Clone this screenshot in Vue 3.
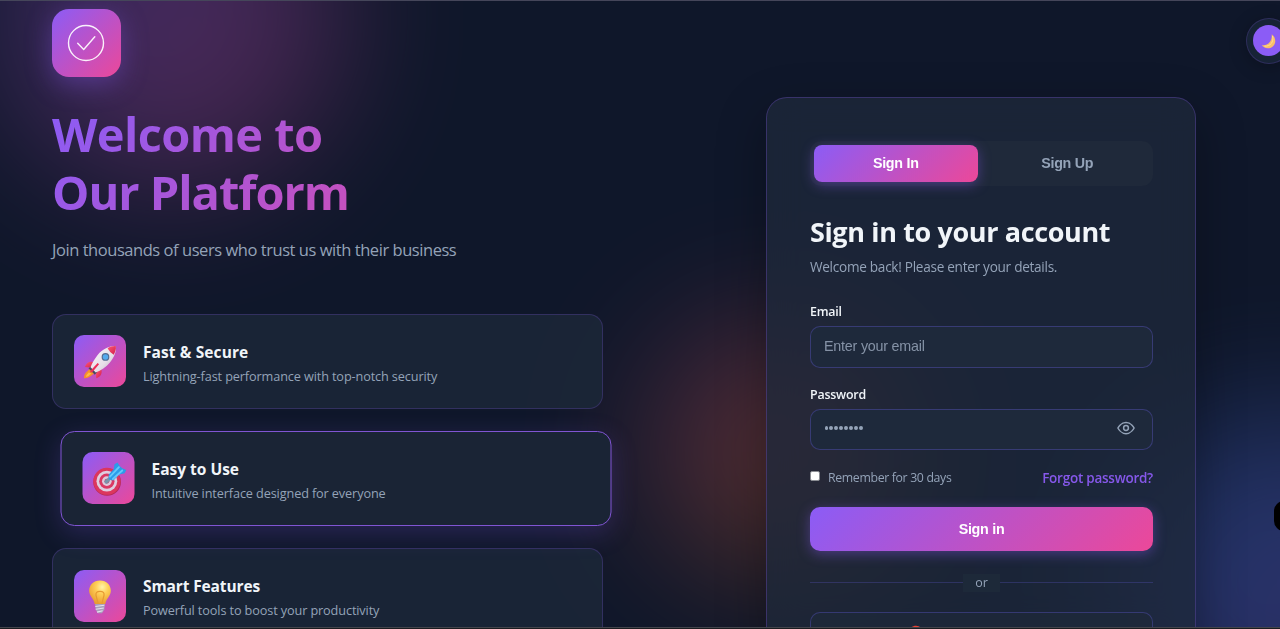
<script setup>
const features = [
  { icon: 'rocket', title: 'Fast & Secure', text: 'Lightning-fast performance with top-notch security' },
  { icon: 'target', title: 'Easy to Use', text: 'Intuitive interface designed for everyone', active: true },
  { icon: 'bulb', title: 'Smart Features', text: 'Powerful tools to boost your productivity' },
]
</script>

<template>
  <div class="page">
    <div class="blob blob-pink"></div>
    <div class="blob blob-blue"></div>
    <div class="blob blob-orange"></div>

    <section class="intro">
      <div class="logo">
        <svg width="38" height="38" viewBox="0 0 38 38" fill="none" stroke="#fff" stroke-opacity=".92" stroke-width="1.4" stroke-linecap="round" stroke-linejoin="round">
          <circle cx="19" cy="19" r="17.5" />
          <path d="M10.700 19.300l6 6.200L27.800 12.700" />
        </svg>
      </div>
      <h1><span class="first">Welcome to</span><br />Our Platform</h1>
      <p class="tagline">Join thousands of users who trust us with their business</p>
      <div class="features">
        <article v-for="f in features" :key="f.icon" class="feature" :class="[f.icon, { active: f.active }]">
          <div class="tile">
            <svg v-if="f.icon === 'rocket'" width="34" height="34" viewBox="0 0 36 36">
              <defs>
                <linearGradient id="body" x1="0" y1="0" x2="1" y2="1"><stop offset="0" stop-color="#fff8fc" /><stop offset=".6" stop-color="#e6dfe8" /><stop offset="1" stop-color="#bda8bf" /></linearGradient>
                <linearGradient id="red" x1="0" y1="0" x2="1" y2="1"><stop offset="0" stop-color="#ff5874" /><stop offset="1" stop-color="#d21c4c" /></linearGradient>
              </defs>
              <path d="M7 25.500L2.800 29.500Q.600 32 1 35.200Q5 35.500 8 33L12 29.800Z" fill="#f7902c" />
              <path d="M6 29Q3.500 31 3.200 34Q6.500 33 9 30Z" fill="#ffbd43" />
              <path d="M12.500 18.500C7.500 16.800 3.700 18.500 2 23.300L9.500 24Z" fill="url(#red)" />
              <path d="M19.500 26C20.600 31 18 34 14 35.300L13.500 27.500Z" fill="url(#red)" />
              <path d="M5.800 24.600L8.800 22.500L15 28.600L12.500 31.500Z" fill="#4b4960" />
              <path d="M34.800 1.200C29 .800 21 3.800 15.500 10.500C12 15 9.500 19.500 8 23.500L13.500 29C19 27 24.500 23.500 28.500 18.500C33 13 35.600 6.500 34.800 1.200Z" fill="url(#body)" />
              <path d="M34.800 1.200C31.600 1 28.500 2 26 3.500Q28.500 8.300 32.500 10.300C34.300 7 35.200 4 34.800 1.200Z" fill="url(#red)" />
              <path d="M15.500 19L8.200 27Q6.800 28.400 8.300 29Q9.300 29 10.500 28L17 20.500Z" fill="#ec2f57" />
              <circle cx="23.800" cy="12.600" r="4.100" fill="#526b91" /><circle cx="23.800" cy="12.600" r="2.900" fill="#55abed" />
            </svg>
            <svg v-else-if="f.icon === 'target'" width="34" height="34" viewBox="0 0 36 36">
              <circle cx="15.500" cy="21.200" r="14.600" fill="#b52a58" /><circle cx="15.200" cy="20.500" r="14.300" fill="#dc365e" />
              <circle cx="15.200" cy="20.300" r="11" fill="#dfcee0" /><circle cx="15.200" cy="20.300" r="8.100" fill="#db3963" />
              <circle cx="15.200" cy="20.300" r="5.100" fill="#dccadd" /><circle cx="15.200" cy="20.300" r="2.600" fill="#a8627e" />
              <path d="M14.500 21L21 14.500" stroke="#7895ac" stroke-width="3.600" stroke-linecap="round" />
              <path d="M17 13.500L22.500 7.500L23.300 2.500L26.500 .500L29 4.500L31.500 6.500L35.800 8.500L34 12L28.500 13.200L22 19.500L17.500 18.500Z" fill="#2b9ce9" />
              <path d="M18.500 15.500L28 5.500M21.500 18L31.500 9" stroke="#62c8fb" stroke-width="2" stroke-linecap="round" />
            </svg>
            <svg v-else width="34" height="34" viewBox="0 0 36 36">
              <defs>
                <radialGradient id="bulb" cx=".6" cy=".28" r=".72"><stop offset="0" stop-color="#fff4aa" /><stop offset=".4" stop-color="#ffcf58" /><stop offset="1" stop-color="#e99c30" /></radialGradient>
              </defs>
              <path d="M18 .500C11 .500 6.500 5.500 6.500 11.500C6.500 17 11.500 19.500 12.400 25.500H23.600C24.500 19.500 29.500 17 29.500 11.500C29.500 5.500 25 .500 18 .500Z" fill="url(#bulb)" />
              <path d="M16 25L13.800 16.500Q13 12 18 12Q23 12 22.200 16.500L20 25" fill="none" stroke="#e79a32" stroke-width="1.300" />
              <path d="M12.800 25.500H23.200L22.600 31.500L20 35.300H16L13.400 31.500Z" fill="#a9a1ba" />
              <path d="M13 28L22.600 26.800M13.500 31L22 29.700M14.800 34L20.800 32.600" stroke="#e6dff0" stroke-width="1.200" />
            </svg>
          </div>
          <div class="copy">
            <h3>{{ f.title }}</h3>
            <p>{{ f.text }}</p>
          </div>
        </article>
      </div>
    </section>

    <section class="card">
      <div class="tabs">
        <button class="tab on">Sign In</button>
        <button class="tab">Sign Up</button>
      </div>
      <h2>Sign in to your account</h2>
      <p class="sub">Welcome back! Please enter your details.</p>
      <label class="label email">Email</label>
      <div class="field">Enter your email</div>
      <label class="label password">Password</label>
      <div class="field">
        <span class="dots"><i v-for="n in 8" :key="n"></i></span>
        <svg class="eye" width="18" height="18" viewBox="0 0 24 24" fill="none" stroke="#94a3b8" stroke-width="2" stroke-linecap="round" stroke-linejoin="round">
          <path d="M1.200 12S5 4.500 12 4.500S22.800 12 22.800 12S19 19.500 12 19.500S1.200 12 1.200 12Z" /><circle cx="12" cy="12" r="3.200" />
        </svg>
      </div>
      <div class="options">
        <span class="check"></span><span class="remember">Remember for 30 days</span>
        <a class="forgot">Forgot password?</a>
      </div>
      <button class="submit">Sign in</button>
      <div class="divider"><span>or</span></div>
      <div class="social">
        <svg width="16" height="16" viewBox="0 0 24 24"><path fill="#ea4335" d="M12 5.400c1.600 0 3 .6 4.200 1.600l3.100-3.100A11 11 0 0 0 2.200 7l3.700 2.900A6.500 6.500 0 0 1 12 5.400Z" /></svg>
      </div>
    </section>

    <div class="toggle">
      <div class="knob">
        <svg width="16" height="16" viewBox="0 0 16 16"><path d="M10.700 1.200C17 5.800 14.500 15.200 6.800 15.200C4 15.200 1.800 13.800.800 12C6.500 13.200 11.500 8.500 10.700 1.200Z" fill="#f9bd68" /><path d="M11.500 3C13 9 9.500 13.500 3.500 13.200" fill="none" stroke="#ffdc94" stroke-width="1" /></svg>
      </div>
    </div>
    <div class="edge-handle"></div>
    <div class="line-top"></div>
    <div class="line-bottom"></div>
  </div>
</template>

<style>
body { margin: 0; overflow: hidden; background: #0f172a; }
</style>

<style scoped>
* { box-sizing: border-box; margin: 0; }
.page { position: relative; width: 1280px; height: 629px; overflow: hidden; background: #0f172a; font-family: "Open Sans", "Noto Sans", sans-serif; color: #f1f5f9; display: flex; align-items: flex-start; }
.blob { position: absolute; border-radius: 50%; filter: blur(68px); opacity: .3; }
.blob-pink { left: -2px; top: -154px; width: 342px; height: 342px; background: linear-gradient(135deg, #8b5cf6, #ec4899); }
.blob-blue { left: 1112px; top: 412px; width: 342px; height: 342px; background: linear-gradient(135deg, #3b82f6, #8b5cf6); }
.blob-orange { left: 648px; top: 320px; width: 257px; height: 257px; background: linear-gradient(135deg, #ec4899, #f97316 75%, #f59e0b); opacity: .28; }

.intro { position: relative; width: 551px; margin: 9px 0 0 52px; flex: none; }
.logo { width: 68.500px; height: 68px; border-radius: 17px; display: flex; align-items: center; justify-content: center; background: linear-gradient(135deg, #8b5cf6, #ec4899); box-shadow: 0 7px 27px rgba(139, 92, 246, .36); }
.logo svg { margin-left: -1px; }
h1 { margin-top: 28px; font-size: 47px; line-height: 58px; font-weight: 700; letter-spacing: -1.030px; white-space: nowrap; width: 551px; background: linear-gradient(135deg, #8b5cf6, #ec4899); background-clip: text; -webkit-background-clip: text; color: transparent; }
.first { letter-spacing: -.600px; }
.tagline { margin-top: 14.500px; height: 28px; line-height: 28px; font-size: 16.500px; letter-spacing: -.450px; color: #94a3b8; white-space: nowrap; }
.features { margin-top: 50px; display: flex; flex-direction: column; gap: 21.700px; }
.feature { height: 95.500px; border: 1px solid rgba(139, 92, 246, .22); border-radius: 14px; background: rgba(27, 39, 56, .88); display: flex; align-items: center; padding-left: 21px; gap: 17px; }
.feature.active { transform: translateX(8.500px); border-color: #8055d3; box-shadow: 0 7px 27px rgba(139, 92, 246, .22); background: #1a2435; }
.tile { width: 52px; height: 52px; border-radius: 10px; flex: none; display: flex; align-items: center; justify-content: center; background: linear-gradient(135deg, #8b5cf6, #ec4899); }
.tile svg { position: relative; top: 1px; }
.target .tile svg { left: 1px; }
.copy { white-space: nowrap; padding-top: 4.500px; }
h3 { font-size: 15.500px; line-height: 24px; font-weight: 700; color: #f1f5f9; }
.rocket h3 { letter-spacing: .100px; }
.bulb h3 { letter-spacing: -.120px; }
.copy p { font-size: 12.700px; line-height: 24px; letter-spacing: -.120px; color: #94a3b8; }

.card { position: relative; flex: none; width: 430px; height: 640px; margin: 97px 0 0 163px; padding: 43px 42px 0 43px; border: 1px solid rgba(139, 92, 246, .27); border-radius: 21px; background: rgba(30, 41, 59, .76); box-shadow: 0 17px 50px rgba(0, 0, 0, .3); backdrop-filter: blur(17px); white-space: nowrap; }
.tabs { height: 45px; padding: 4px; border-radius: 11px; background: #1f293a; display: flex; gap: 8px; }
.tab { flex: 1; height: 36.500px; border: 0; padding: 0; border-radius: 8px; background: none; font: 700 14.300px "Liberation Sans", sans-serif; letter-spacing: -.280px; color: #94a3b8; }
.tab.on { color: #fff; background: linear-gradient(135deg, #8b5cf6, #ec4899); box-shadow: 0 3px 13px rgba(139, 92, 246, .4); }
h2 { margin-top: 27px; font-size: 27px; line-height: 38px; font-weight: 700; letter-spacing: -.370px; }
.sub { margin-top: 4px; font-size: 13.600px; line-height: 24px; letter-spacing: -.280px; color: #94a3b8; }
.label { display: block; font-size: 12.400px; line-height: 18px; font-weight: 600; letter-spacing: -.200px; color: #f1f5f9; }
.email { margin-top: 24px; }
.password { margin-top: 18px; }
.field { margin-top: 5px; height: 41.500px; border: 1px solid rgba(99, 92, 220, .36); border-radius: 10px; background: #1e293b; padding: 0 17px 2px 13px; display: flex; align-items: center; justify-content: space-between; font: 14.300px "Liberation Sans", sans-serif; letter-spacing: -.210px; color: #8592a6; }
.dots { display: flex; gap: 1px; padding-left: .500px; }
.dots i { width: 3.900px; height: 3.900px; border-radius: 50%; background: #94a3b8; }
.options { height: 20px; margin-top: 18px; display: flex; align-items: center; }
.check { width: 10px; height: 10px; border-radius: 2px; background: #fff; border: 1px solid #8b8d93; margin-top: -4px; }
.remember { margin-left: 8px; margin-top: -2px; font-size: 12.300px; letter-spacing: -.340px; color: #94a3b8; }
.forgot { margin-left: auto; font-size: 13.500px; font-weight: 600; letter-spacing: -.250px; color: #8658ea; }
.submit { display: block; margin-top: 19px; width: 343px; height: 43.500px; border: 0; border-radius: 10px; color: #fff; font: 700 14.300px "Liberation Sans", sans-serif; letter-spacing: -.280px; background: linear-gradient(135deg, #8b5cf6, #ec4899); box-shadow: 0 3px 13px rgba(139, 92, 246, .4); }
.divider { margin-top: 23px; height: 18px; display: flex; align-items: center; font-size: 12.500px; color: #94a3b8; }
.divider::before, .divider::after { content: ""; height: 1px; flex: 1; background: rgba(99, 92, 220, .26); }
.divider span { width: 37px; text-align: center; background: #1d2939; line-height: 18px; }
.social { margin-top: 20px; height: 43px; border: 1px solid rgba(99, 92, 220, .35); border-radius: 10px; background: rgba(30, 41, 59, .85); padding: 11px 0 0 97px; }

.toggle { position: absolute; left: 1246px; top: 18px; width: 46px; height: 46px; border-radius: 50%; border: 1px solid rgba(139, 92, 246, .2); background: #172336; display: flex; align-items: center; padding-left: 6px; box-shadow: 0 3px 17px rgba(0, 0, 0, .25); }
.knob { width: 31px; height: 31px; border-radius: 50%; background: #8b5cf6; display: flex; align-items: center; justify-content: center; margin-top: -1px; }
.edge-handle { position: absolute; left: 1274px; top: 501px; width: 20px; height: 30px; border-radius: 10px; background: #000; }
.line-top { position: absolute; left: 0; top: 0; width: 100%; height: 1px; background: #45465a; }
.line-bottom { position: absolute; left: 0; top: 627px; width: 100%; height: 2px; background: #1b1c20; border-top: 1px solid #43454c; }
</style>
